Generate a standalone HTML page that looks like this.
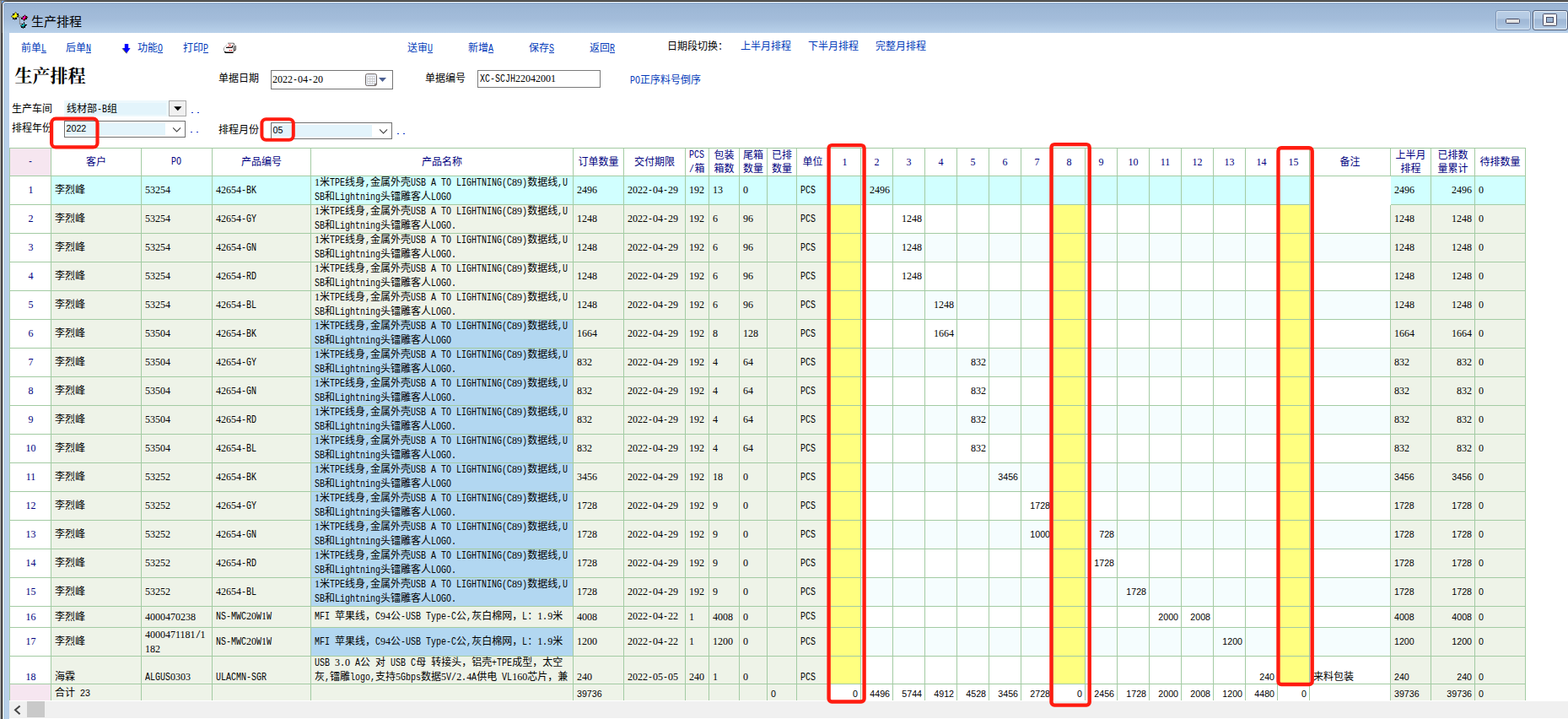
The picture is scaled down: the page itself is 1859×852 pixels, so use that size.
<!DOCTYPE html>
<html lang="zh"><head><meta charset="utf-8"><title>生产排程</title>
<style>
html,body{margin:0;padding:0}
body{width:1859px;height:852px;overflow:hidden;background:#fff;position:relative;
 font-family:"Liberation Serif",serif;font-size:12px;line-height:16px;color:#000}
.r{position:absolute}
.t{position:absolute;white-space:nowrap;line-height:14px;height:14px}
.m{font-family:"Liberation Mono",monospace;font-size:12px;display:inline-block;white-space:pre;
 transform:scaleX(.8333);transform-origin:0 50%}
.k{font-family:"Liberation Sans","Noto Sans CJK SC",sans-serif;font-size:12px}
.lk{color:#0039b9}
.c{position:absolute;display:flex;align-items:center;box-sizing:border-box;padding:0 3px 1px 4px;
 white-space:nowrap;overflow:hidden}
.c>div{width:100%}
.rt{text-align:right}
.ct{text-align:center}
.h{color:#000080;padding:0 0 1px 0}
.nv{color:#000080}
.ss{font-family:"Liberation Sans",sans-serif}
.dy{font-family:"Liberation Sans",sans-serif;font-size:10.67px}
u{text-decoration:underline}
</style></head>
<body>
<div class="r" style="left:0px;top:0px;width:1px;height:852px;background:#a0a0a0"></div>
<div class="r" style="left:1px;top:0px;width:1px;height:852px;background:#727272"></div>
<div class="r" style="left:2px;top:0px;width:1px;height:852px;background:#0a0a0a"></div>
<div class="r" style="left:3px;top:0px;width:1px;height:852px;background:#ffffff"></div>
<div class="r" style="left:4px;top:39px;width:7px;height:813px;background:#b8d0ea"></div>
<div class="r" style="left:0px;top:0px;width:1859px;height:1px;background:#6e6e6e"></div>
<div class="r" style="left:0px;top:1px;width:1859px;height:1px;background:#1c1c1c"></div>
<div class="r" style="left:3px;top:2px;width:1856px;height:1px;background:#ffffff"></div>
<div class="r" style="left:0px;top:1px;width:1px;height:851px;background:#a0a0a0"></div>
<div class="r" style="left:1px;top:1px;width:1px;height:851px;background:#727272"></div>
<div class="r" style="left:4px;top:3px;width:1855px;height:36px;background:linear-gradient(to bottom,#90aed0 0%,#99b3d3 4%,#9fb9d7 27%,#a3bcda 54%,#aec7e2 78%,#b9d1ea 100%)"></div>
<div class="r" style="left:2px;top:2px;width:1px;height:37px;background:#2c2c2c"></div>
<svg class="r" style="left:2px;top:1px" width="6" height="6" viewBox="0 0 6 6"><rect width="6" height="6" fill="#78b0ff"/><path d="M0 5A5 5 0 0 1 5 0H6V6H0Z" fill="#2c2c2c"/><path d="M1 5A4 4 0 0 1 5 1H6V6H1Z" fill="#fff"/><path d="M2 5A3 3 0 0 1 5 2H6V6H2Z" fill="#93b0d1"/></svg>
<svg class="r" style="left:10px;top:10px" width="28" height="28" viewBox="10 10 28 28"><path d="M20 20.4H27M23.4 20.4V28.4H27" stroke="#808080" stroke-width="1.1" fill="none"/><rect x="14.8" y="15.8" width="2.2" height="2.2" fill="#000" shape-rendering="crispEdges"/><rect x="19.9" y="15.8" width="2.2" height="2.2" fill="#000" shape-rendering="crispEdges"/><rect x="14.8" y="20.8" width="2.2" height="2.2" fill="#000" shape-rendering="crispEdges"/><rect x="17.5" y="20.9" width="2.0" height="2.0" fill="#000" shape-rendering="crispEdges"/><rect x="20.2" y="18.5" width="1.6" height="1.6" fill="#000" shape-rendering="crispEdges"/><path d="M18.5 14.3L20.0 16.2L20.3 18.0L22.6 18.5L20.3 19.4L19.2 20.5L17.9 21.3L17.5 23.5L17.0 21.3L15.2 20.8L13.1 19.5L15.2 18.2L17.0 17.6L17.3 15.9Z" fill="#ffff00" stroke="#1a1a30" stroke-width=".7" stroke-linejoin="round"/><rect x="24.9" y="20.9" width="2.0" height="2.0" fill="#000" shape-rendering="crispEdges"/><rect x="30.1" y="21.2" width="2.0" height="2.0" fill="#000" shape-rendering="crispEdges"/><rect x="30.3" y="18.8" width="1.7" height="1.7" fill="#000" shape-rendering="crispEdges"/><rect x="26.9" y="19.1" width="1.5" height="1.5" fill="#000" shape-rendering="crispEdges"/><rect x="28.9" y="22.9" width="1.5" height="1.5" fill="#000" shape-rendering="crispEdges"/><path d="M29.5 17.7L30.6 19.6L33.1 20.5L30.6 21.6L28.6 24.7L27.6 23.0L25.2 22.0L27.6 20.6Z" fill="#c00000" stroke="#101010" stroke-width=".7" stroke-linejoin="round"/><path d="M29.1 18.9L30.3 19.7L28.0 23.0L26.8 21.9Z" fill="#ff00ff"/><rect x="24.9" y="31.1" width="2.0" height="2.0" fill="#000" shape-rendering="crispEdges"/><rect x="27.6" y="31.1" width="2.0" height="2.0" fill="#000" shape-rendering="crispEdges"/><rect x="25.6" y="27.9" width="1.5" height="1.5" fill="#000" shape-rendering="crispEdges"/><rect x="29.4" y="29.9" width="1.5" height="1.5" fill="#000" shape-rendering="crispEdges"/><path d="M28.5 26.2V28.4M30 29.5H32" stroke="#000" stroke-width="1"/><path d="M24.0 30.5L26.8 29.5L28.5 28.0L29.8 28.9L29.0 30.4L27.9 31.3L27.5 33.8L26.8 31.5L25.0 31.2Z" fill="#00e0e0" stroke="#101010" stroke-width=".7" stroke-linejoin="round"/></svg>
<div class="t" style="left:37px;top:14.5px;line-height:22px;height:22px"><span class="k" style="font-size:15px">生产排程</span></div>
<div class="r" style="left:1773px;top:12px;width:42px;height:24px;box-sizing:border-box;border:1px solid #7d93b3;border-radius:3px;background:linear-gradient(to bottom,#b9cee6 0%,#b4cae3 42%,#a0b8d6 44%,#a4bcd9 70%,#bad1e9 100%);box-shadow:inset 0 0 0 1px rgba(255,255,255,.45)"></div>
<div class="r" style="left:1817px;top:12px;width:42px;height:24px;box-sizing:border-box;border:1px solid #4b5872;border-radius:3px;background:linear-gradient(to bottom,#b9cee6 0%,#b4cae3 42%,#a0b8d6 44%,#a4bcd9 70%,#bad1e9 100%);box-shadow:inset 0 0 0 1px rgba(255,255,255,.75)"></div>
<div class="r" style="left:1785px;top:22px;width:17px;height:6px;box-sizing:border-box;border:1px solid #474a63;border-radius:1.5px;background:#e2e2e2"></div>
<div class="r" style="left:1829px;top:16px;width:17px;height:15px;box-sizing:border-box;border:1px solid #474a63;border-radius:1.5px;background:linear-gradient(to bottom,#fff 0%,#fff 60%,#dcdcdc 100%)"></div>
<div class="r" style="left:1833px;top:20px;width:9px;height:7px;box-sizing:border-box;border:1px solid #474a63;background:#9bb4d2"></div>
<div class="t" style="left:25px;top:50px;color:#0039b9"><span class="k">前单</span><span class="m" style="margin-right:-1.2px"><u>L</u></span></div>
<div class="t" style="left:78px;top:50px;color:#0039b9"><span class="k">后单</span><span class="m" style="margin-right:-1.2px"><u>N</u></span></div>
<div class="t" style="left:163px;top:50px;color:#0039b9"><span class="k">功能</span><span class="m" style="margin-right:-1.2px"><u>O</u></span></div>
<div class="t" style="left:217px;top:50px;color:#0039b9"><span class="k">打印</span><span class="m" style="margin-right:-1.2px"><u>P</u></span></div>
<div class="t" style="left:483px;top:50px;color:#0039b9"><span class="k">送审</span><span class="m" style="margin-right:-1.2px"><u>U</u></span></div>
<div class="t" style="left:555px;top:50px;color:#0039b9"><span class="k">新增</span><span class="m" style="margin-right:-1.2px"><u>A</u></span></div>
<div class="t" style="left:627px;top:50px;color:#0039b9"><span class="k">保存</span><span class="m" style="margin-right:-1.2px"><u>S</u></span></div>
<div class="t" style="left:699px;top:50px;color:#0039b9"><span class="k">返回</span><span class="m" style="margin-right:-1.2px"><u>R</u></span></div>
<div class="t" style="left:791px;top:48px;color:#000"><span class="k">日期段切换：</span></div>
<div class="t" style="left:878px;top:48px;color:#0039b9"><span class="k">上半月排程</span></div>
<div class="t" style="left:958px;top:48px;color:#0039b9"><span class="k">下半月排程</span></div>
<div class="t" style="left:1038px;top:48px;color:#0039b9"><span class="k">完整月排程</span></div>
<div class="t" style="left:747px;top:88px;color:#0039b9"><span class="m" style="margin-right:-2.4px">PO</span><span class="k">正序料号倒序</span></div>
<svg class="r" style="left:143px;top:50px" width="14" height="15" viewBox="143 50 14 15">
<path d="M147.8 52H152.2V57H154.6L150.1 63.2L145 57H147.8Z" fill="#0000ff"/>
<path d="M145 57.4L150 63.4" stroke="#6b6b30" stroke-width="1" fill="none"/>
</svg>
<svg class="r" style="left:263px;top:49px" width="20" height="16" viewBox="263 49 20 16">
<path d="M270 51.2H277.2" stroke="#777" stroke-width="1"/>
<path d="M277.2 51.6V53" stroke="#111" stroke-width="1.2"/>
<path d="M269.6 52.6L266 56.6" stroke="#999" stroke-width="1"/>
<path d="M266 57L270 52H277L275 56.5H279L280 55V59L276.8 62H267L265.4 60.4V57Z" fill="#fff"/>
<path d="M276.2 56.4L278.2 54H280.2V59L276.6 62Z" fill="#858585"/>
<path d="M275.6 54.2H279.8" stroke="#8a8a8a" stroke-width=".9" fill="none"/>
<path d="M265.4 56.6V60.2" stroke="#9a9a9a" stroke-width="1"/>
<path d="M268 56.4H275L276 54" stroke="#111" stroke-width="1.2" fill="none"/>
<path d="M266.2 61L267.4 62.2H276.6" stroke="#000" stroke-width="1.4" fill="none"/>
<path d="M270.4 56L273.8 52.2M271.4 52.2L274.6 55.8" stroke="#e01010" stroke-width="1" stroke-dasharray="1 .5"/>
<rect x="271.9" y="59" width="1.2" height="1.2" fill="#f00"/><rect x="273.9" y="59" width="1.2" height="1.2" fill="#f00"/>
<circle cx="278.4" cy="59.6" r=".7" fill="#111"/>
</svg>
<div class="t" style="left:17.5px;top:77px;line-height:26px;height:26px"><span style="font-family:'Liberation Serif','Noto Serif CJK SC',serif;font-size:21px;font-weight:bold">生产排程</span></div>
<div class="t" style="left:259px;top:86px"><span class="k">单据日期</span></div>
<div class="t" style="left:504px;top:86px"><span class="k">单据编号</span></div>
<div class="t" style="left:14px;top:122px"><span class="k">生产车间</span></div>
<div class="t" style="left:14px;top:145px"><span class="k">排程年份</span></div>
<div class="t" style="left:259px;top:147px"><span class="k">排程月份</span></div>
<div class="r" style="left:321px;top:83px;width:145px;height:23px;box-sizing:border-box;border:1px solid #747474;background:#fff"></div>
<div class="t" style="left:323px;top:87px">2022<span class="m" style="margin-right:-1.2px">-</span>04<span class="m" style="margin-right:-1.2px">-</span>20</div>
<svg class="r" style="left:432px;top:86px" width="28" height="17" viewBox="432 86 28 17">
<rect x="433.5" y="87.7" width="13" height="13.8" rx="1.8" fill="#eef3fc" stroke="#6d6361" stroke-width="1"/>
<rect x="435.3" y="90.2" width="9.6" height="9.6" fill="#c9c9c9"/>
<g fill="#f3f6fd"><rect x="436.2" y="91" width="2.1" height="2"/><rect x="439.2" y="91" width="2.1" height="2"/><rect x="442.2" y="91" width="2.1" height="2"/>
<rect x="436.2" y="94" width="2.1" height="2"/><rect x="439.2" y="94" width="2.1" height="2"/><rect x="442.2" y="94" width="2.1" height="2"/>
<rect x="436.2" y="97" width="2.1" height="2"/><rect x="439.2" y="97" width="2.1" height="2"/><rect x="442.2" y="97" width="2.1" height="2"/></g>
<path d="M444.6 101.6V99.6H446.6" stroke="#6d6361" stroke-width="1" fill="none"/>
<path d="M449 92H458L453.5 97Z" fill="#4b6092"/>
</svg>
<div class="r" style="left:566px;top:83px;width:146px;height:21px;box-sizing:border-box;border:1px solid #7a7a7a;background:#fff"></div>
<div class="t" style="left:569px;top:86px"><span class="m" style="margin-right:-8.4px">XC-SCJH</span>22042001</div>
<div class="r" style="left:76px;top:119px;width:124px;height:19px;background:#edf8fc"></div>
<div class="r" style="left:78px;top:122px;width:119px;height:14px;background:#e3f4fb"></div>
<div class="t" style="left:79px;top:122px"><span class="k">线材部</span><span class="m" style="margin-right:-2.4px">-B</span><span class="k">组</span></div>
<div class="r" style="left:200px;top:119px;width:21px;height:19px;box-sizing:border-box;border:1px solid #a8a8a8;background:#f0f0f0"></div>
<svg class="r" style="left:205px;top:125px" width="12" height="8" viewBox="0 0 12 8"><path d="M1.2 1.2H10.4L5.8 6.3Z" fill="#000"/></svg>
<div class="r" style="left:76px;top:143px;width:144px;height:20px;box-sizing:border-box;border:1px solid #707070;background:#fff"></div>
<div class="r" style="left:78px;top:146px;width:118px;height:14px;background:#e3f4fb"></div>
<div class="t ss" style="left:78.5px;top:145px;font-size:10.7px">2022</div>
<svg class="r" style="left:204px;top:150px" width="12" height="8" viewBox="0 0 12 8"><path d="M1.1 1.3L5.6 6L10.1 1.3" stroke="#444" stroke-width="1.1" fill="none"/></svg>
<div class="r" style="left:321px;top:145px;width:144px;height:20px;box-sizing:border-box;border:1px solid #707070;background:#fff"></div>
<div class="r" style="left:324px;top:148px;width:117px;height:14px;background:#e3f4fb"></div>
<div class="t ss" style="left:323.5px;top:147px;font-size:10.7px">05</div>
<svg class="r" style="left:449px;top:152px" width="12" height="8" viewBox="0 0 12 8"><path d="M1.1 1.3L5.6 6L10.1 1.3" stroke="#444" stroke-width="1.1" fill="none"/></svg>
<div class="r" style="left:227px;top:133px;width:2px;height:1px;background:#1038c8"></div>
<div class="r" style="left:234px;top:133px;width:2px;height:1px;background:#1038c8"></div>
<div class="r" style="left:226px;top:156px;width:2px;height:1px;background:#1038c8"></div>
<div class="r" style="left:233px;top:156px;width:2px;height:1px;background:#1038c8"></div>
<div class="r" style="left:471px;top:158px;width:2px;height:1px;background:#1038c8"></div>
<div class="r" style="left:478px;top:158px;width:2px;height:1px;background:#1038c8"></div>
<div class="r" style="left:12px;top:176px;width:1796px;height:32px;background:#fff"></div>
<div class="r" style="left:12px;top:176px;width:48px;height:32px;background:#f6e6f0"></div>
<div class="r" style="left:61px;top:209px;width:921px;height:34px;background:#d1ffff"></div>
<div class="r" style="left:983px;top:209px;width:665px;height:34px;background:#d1ffff"></div>
<div class="r" style="left:1649px;top:209px;width:159px;height:34px;background:#d1ffff"></div>
<div class="r" style="left:61px;top:243px;width:921px;height:34px;background:#eef3e8"></div>
<div class="r" style="left:983px;top:243px;width:37px;height:34px;background:#ffff80"></div>
<div class="r" style="left:1249px;top:243px;width:37px;height:34px;background:#ffff80"></div>
<div class="r" style="left:1515px;top:243px;width:37px;height:34px;background:#ffff80"></div>
<div class="r" style="left:1649px;top:243px;width:159px;height:34px;background:#eef3e8"></div>
<div class="r" style="left:61px;top:277px;width:921px;height:34px;background:#eef3e8"></div>
<div class="r" style="left:983px;top:277px;width:665px;height:34px;background:#f5fdfe"></div>
<div class="r" style="left:983px;top:277px;width:37px;height:34px;background:#ffff80"></div>
<div class="r" style="left:1249px;top:277px;width:37px;height:34px;background:#ffff80"></div>
<div class="r" style="left:1515px;top:277px;width:37px;height:34px;background:#ffff80"></div>
<div class="r" style="left:1649px;top:277px;width:159px;height:34px;background:#eef3e8"></div>
<div class="r" style="left:61px;top:311px;width:921px;height:34px;background:#eef3e8"></div>
<div class="r" style="left:983px;top:311px;width:37px;height:34px;background:#ffff80"></div>
<div class="r" style="left:1249px;top:311px;width:37px;height:34px;background:#ffff80"></div>
<div class="r" style="left:1515px;top:311px;width:37px;height:34px;background:#ffff80"></div>
<div class="r" style="left:1649px;top:311px;width:159px;height:34px;background:#eef3e8"></div>
<div class="r" style="left:61px;top:345px;width:921px;height:34px;background:#eef3e8"></div>
<div class="r" style="left:983px;top:345px;width:665px;height:34px;background:#f5fdfe"></div>
<div class="r" style="left:983px;top:345px;width:37px;height:34px;background:#ffff80"></div>
<div class="r" style="left:1249px;top:345px;width:37px;height:34px;background:#ffff80"></div>
<div class="r" style="left:1515px;top:345px;width:37px;height:34px;background:#ffff80"></div>
<div class="r" style="left:1649px;top:345px;width:159px;height:34px;background:#eef3e8"></div>
<div class="r" style="left:61px;top:379px;width:921px;height:34px;background:#eef3e8"></div>
<div class="r" style="left:369px;top:379px;width:310px;height:34px;background:#b2d7f1"></div>
<div class="r" style="left:983px;top:379px;width:37px;height:34px;background:#ffff80"></div>
<div class="r" style="left:1249px;top:379px;width:37px;height:34px;background:#ffff80"></div>
<div class="r" style="left:1515px;top:379px;width:37px;height:34px;background:#ffff80"></div>
<div class="r" style="left:1649px;top:379px;width:159px;height:34px;background:#eef3e8"></div>
<div class="r" style="left:61px;top:413px;width:921px;height:34px;background:#eef3e8"></div>
<div class="r" style="left:369px;top:413px;width:310px;height:34px;background:#b2d7f1"></div>
<div class="r" style="left:983px;top:413px;width:665px;height:34px;background:#f5fdfe"></div>
<div class="r" style="left:983px;top:413px;width:37px;height:34px;background:#ffff80"></div>
<div class="r" style="left:1249px;top:413px;width:37px;height:34px;background:#ffff80"></div>
<div class="r" style="left:1515px;top:413px;width:37px;height:34px;background:#ffff80"></div>
<div class="r" style="left:1649px;top:413px;width:159px;height:34px;background:#eef3e8"></div>
<div class="r" style="left:61px;top:447px;width:921px;height:34px;background:#eef3e8"></div>
<div class="r" style="left:369px;top:447px;width:310px;height:34px;background:#b2d7f1"></div>
<div class="r" style="left:983px;top:447px;width:37px;height:34px;background:#ffff80"></div>
<div class="r" style="left:1249px;top:447px;width:37px;height:34px;background:#ffff80"></div>
<div class="r" style="left:1515px;top:447px;width:37px;height:34px;background:#ffff80"></div>
<div class="r" style="left:1649px;top:447px;width:159px;height:34px;background:#eef3e8"></div>
<div class="r" style="left:61px;top:481px;width:921px;height:34px;background:#eef3e8"></div>
<div class="r" style="left:369px;top:481px;width:310px;height:34px;background:#b2d7f1"></div>
<div class="r" style="left:983px;top:481px;width:665px;height:34px;background:#f5fdfe"></div>
<div class="r" style="left:983px;top:481px;width:37px;height:34px;background:#ffff80"></div>
<div class="r" style="left:1249px;top:481px;width:37px;height:34px;background:#ffff80"></div>
<div class="r" style="left:1515px;top:481px;width:37px;height:34px;background:#ffff80"></div>
<div class="r" style="left:1649px;top:481px;width:159px;height:34px;background:#eef3e8"></div>
<div class="r" style="left:61px;top:515px;width:921px;height:34px;background:#eef3e8"></div>
<div class="r" style="left:369px;top:515px;width:310px;height:34px;background:#b2d7f1"></div>
<div class="r" style="left:983px;top:515px;width:37px;height:34px;background:#ffff80"></div>
<div class="r" style="left:1249px;top:515px;width:37px;height:34px;background:#ffff80"></div>
<div class="r" style="left:1515px;top:515px;width:37px;height:34px;background:#ffff80"></div>
<div class="r" style="left:1649px;top:515px;width:159px;height:34px;background:#eef3e8"></div>
<div class="r" style="left:61px;top:549px;width:921px;height:34px;background:#eef3e8"></div>
<div class="r" style="left:369px;top:549px;width:310px;height:34px;background:#b2d7f1"></div>
<div class="r" style="left:983px;top:549px;width:665px;height:34px;background:#f5fdfe"></div>
<div class="r" style="left:983px;top:549px;width:37px;height:34px;background:#ffff80"></div>
<div class="r" style="left:1249px;top:549px;width:37px;height:34px;background:#ffff80"></div>
<div class="r" style="left:1515px;top:549px;width:37px;height:34px;background:#ffff80"></div>
<div class="r" style="left:1649px;top:549px;width:159px;height:34px;background:#eef3e8"></div>
<div class="r" style="left:61px;top:583px;width:921px;height:34px;background:#eef3e8"></div>
<div class="r" style="left:369px;top:583px;width:310px;height:34px;background:#b2d7f1"></div>
<div class="r" style="left:983px;top:583px;width:37px;height:34px;background:#ffff80"></div>
<div class="r" style="left:1249px;top:583px;width:37px;height:34px;background:#ffff80"></div>
<div class="r" style="left:1515px;top:583px;width:37px;height:34px;background:#ffff80"></div>
<div class="r" style="left:1649px;top:583px;width:159px;height:34px;background:#eef3e8"></div>
<div class="r" style="left:61px;top:617px;width:921px;height:34px;background:#eef3e8"></div>
<div class="r" style="left:369px;top:617px;width:310px;height:34px;background:#b2d7f1"></div>
<div class="r" style="left:983px;top:617px;width:665px;height:34px;background:#f5fdfe"></div>
<div class="r" style="left:983px;top:617px;width:37px;height:34px;background:#ffff80"></div>
<div class="r" style="left:1249px;top:617px;width:37px;height:34px;background:#ffff80"></div>
<div class="r" style="left:1515px;top:617px;width:37px;height:34px;background:#ffff80"></div>
<div class="r" style="left:1649px;top:617px;width:159px;height:34px;background:#eef3e8"></div>
<div class="r" style="left:61px;top:651px;width:921px;height:34px;background:#eef3e8"></div>
<div class="r" style="left:369px;top:651px;width:310px;height:34px;background:#b2d7f1"></div>
<div class="r" style="left:983px;top:651px;width:37px;height:34px;background:#ffff80"></div>
<div class="r" style="left:1249px;top:651px;width:37px;height:34px;background:#ffff80"></div>
<div class="r" style="left:1515px;top:651px;width:37px;height:34px;background:#ffff80"></div>
<div class="r" style="left:1649px;top:651px;width:159px;height:34px;background:#eef3e8"></div>
<div class="r" style="left:61px;top:685px;width:921px;height:34px;background:#eef3e8"></div>
<div class="r" style="left:369px;top:685px;width:310px;height:34px;background:#b2d7f1"></div>
<div class="r" style="left:983px;top:685px;width:665px;height:34px;background:#f5fdfe"></div>
<div class="r" style="left:983px;top:685px;width:37px;height:34px;background:#ffff80"></div>
<div class="r" style="left:1249px;top:685px;width:37px;height:34px;background:#ffff80"></div>
<div class="r" style="left:1515px;top:685px;width:37px;height:34px;background:#ffff80"></div>
<div class="r" style="left:1649px;top:685px;width:159px;height:34px;background:#eef3e8"></div>
<div class="r" style="left:61px;top:719px;width:921px;height:25px;background:#eef3e8"></div>
<div class="r" style="left:983px;top:719px;width:37px;height:25px;background:#ffff80"></div>
<div class="r" style="left:1249px;top:719px;width:37px;height:25px;background:#ffff80"></div>
<div class="r" style="left:1515px;top:719px;width:37px;height:25px;background:#ffff80"></div>
<div class="r" style="left:1649px;top:719px;width:159px;height:25px;background:#eef3e8"></div>
<div class="r" style="left:61px;top:744px;width:921px;height:34px;background:#eef3e8"></div>
<div class="r" style="left:369px;top:744px;width:310px;height:34px;background:#b2d7f1"></div>
<div class="r" style="left:983px;top:744px;width:665px;height:34px;background:#f5fdfe"></div>
<div class="r" style="left:983px;top:744px;width:37px;height:34px;background:#ffff80"></div>
<div class="r" style="left:1249px;top:744px;width:37px;height:34px;background:#ffff80"></div>
<div class="r" style="left:1515px;top:744px;width:37px;height:34px;background:#ffff80"></div>
<div class="r" style="left:1649px;top:744px;width:159px;height:34px;background:#eef3e8"></div>
<div class="r" style="left:61px;top:778px;width:921px;height:33px;background:#eef3e8"></div>
<div class="r" style="left:983px;top:778px;width:37px;height:33px;background:#ffff80"></div>
<div class="r" style="left:1249px;top:778px;width:37px;height:33px;background:#ffff80"></div>
<div class="r" style="left:1515px;top:778px;width:37px;height:33px;background:#ffff80"></div>
<div class="r" style="left:1649px;top:778px;width:159px;height:33px;background:#eef3e8"></div>
<div class="r" style="left:12px;top:811px;width:48px;height:19px;background:#f6e6f0"></div>
<div class="r" style="left:61px;top:811px;width:921px;height:19px;background:#eef3e8"></div>
<div class="r" style="left:1649px;top:811px;width:159px;height:19px;background:#eef3e8"></div>
<div class="r" style="left:11px;top:175px;width:1px;height:655px;background:#a3cba3"></div>
<div class="r" style="left:60px;top:175px;width:1px;height:655px;background:#a3cba3"></div>
<div class="r" style="left:167px;top:175px;width:1px;height:655px;background:#a3cba3"></div>
<div class="r" style="left:251px;top:175px;width:1px;height:655px;background:#a3cba3"></div>
<div class="r" style="left:368px;top:175px;width:1px;height:655px;background:#a3cba3"></div>
<div class="r" style="left:679px;top:175px;width:1px;height:655px;background:#a3cba3"></div>
<div class="r" style="left:739px;top:175px;width:1px;height:655px;background:#a3cba3"></div>
<div class="r" style="left:812px;top:175px;width:1px;height:655px;background:#a3cba3"></div>
<div class="r" style="left:840px;top:175px;width:1px;height:655px;background:#a3cba3"></div>
<div class="r" style="left:876px;top:175px;width:1px;height:655px;background:#a3cba3"></div>
<div class="r" style="left:909px;top:175px;width:1px;height:655px;background:#a3cba3"></div>
<div class="r" style="left:944px;top:175px;width:1px;height:655px;background:#a3cba3"></div>
<div class="r" style="left:982px;top:175px;width:1px;height:655px;background:#a3cba3"></div>
<div class="r" style="left:1020px;top:175px;width:1px;height:655px;background:#a3cba3"></div>
<div class="r" style="left:1058px;top:175px;width:1px;height:655px;background:#a3cba3"></div>
<div class="r" style="left:1096px;top:175px;width:1px;height:655px;background:#a3cba3"></div>
<div class="r" style="left:1134px;top:175px;width:1px;height:655px;background:#a3cba3"></div>
<div class="r" style="left:1172px;top:175px;width:1px;height:655px;background:#a3cba3"></div>
<div class="r" style="left:1210px;top:175px;width:1px;height:655px;background:#a3cba3"></div>
<div class="r" style="left:1248px;top:175px;width:1px;height:655px;background:#a3cba3"></div>
<div class="r" style="left:1286px;top:175px;width:1px;height:655px;background:#a3cba3"></div>
<div class="r" style="left:1324px;top:175px;width:1px;height:655px;background:#a3cba3"></div>
<div class="r" style="left:1362px;top:175px;width:1px;height:655px;background:#a3cba3"></div>
<div class="r" style="left:1400px;top:175px;width:1px;height:655px;background:#a3cba3"></div>
<div class="r" style="left:1438px;top:175px;width:1px;height:655px;background:#a3cba3"></div>
<div class="r" style="left:1476px;top:175px;width:1px;height:655px;background:#a3cba3"></div>
<div class="r" style="left:1514px;top:175px;width:1px;height:655px;background:#a3cba3"></div>
<div class="r" style="left:1552px;top:175px;width:1px;height:655px;background:#a3cba3"></div>
<div class="r" style="left:1648px;top:175px;width:1px;height:655px;background:#a3cba3"></div>
<div class="r" style="left:1696px;top:175px;width:1px;height:655px;background:#a3cba3"></div>
<div class="r" style="left:1748px;top:175px;width:1px;height:655px;background:#a3cba3"></div>
<div class="r" style="left:1808px;top:175px;width:1px;height:655px;background:#a3cba3"></div>
<div class="r" style="left:11px;top:175px;width:1798px;height:1px;background:#a3cba3"></div>
<div class="r" style="left:11px;top:208px;width:1798px;height:1px;background:#a3cba3"></div>
<div class="r" style="left:11px;top:242px;width:1798px;height:1px;background:#a3cba3"></div>
<div class="r" style="left:11px;top:276px;width:1798px;height:1px;background:#a3cba3"></div>
<div class="r" style="left:11px;top:310px;width:1798px;height:1px;background:#a3cba3"></div>
<div class="r" style="left:11px;top:344px;width:1798px;height:1px;background:#a3cba3"></div>
<div class="r" style="left:11px;top:378px;width:1798px;height:1px;background:#a3cba3"></div>
<div class="r" style="left:11px;top:412px;width:1798px;height:1px;background:#a3cba3"></div>
<div class="r" style="left:11px;top:446px;width:1798px;height:1px;background:#a3cba3"></div>
<div class="r" style="left:11px;top:480px;width:1798px;height:1px;background:#a3cba3"></div>
<div class="r" style="left:11px;top:514px;width:1798px;height:1px;background:#a3cba3"></div>
<div class="r" style="left:11px;top:548px;width:1798px;height:1px;background:#a3cba3"></div>
<div class="r" style="left:11px;top:582px;width:1798px;height:1px;background:#a3cba3"></div>
<div class="r" style="left:11px;top:616px;width:1798px;height:1px;background:#a3cba3"></div>
<div class="r" style="left:11px;top:650px;width:1798px;height:1px;background:#a3cba3"></div>
<div class="r" style="left:11px;top:684px;width:1798px;height:1px;background:#a3cba3"></div>
<div class="r" style="left:11px;top:718px;width:1798px;height:1px;background:#a3cba3"></div>
<div class="r" style="left:11px;top:743px;width:1798px;height:1px;background:#a3cba3"></div>
<div class="r" style="left:11px;top:777px;width:1798px;height:1px;background:#a3cba3"></div>
<div class="r" style="left:11px;top:810px;width:1798px;height:1px;background:#a3cba3"></div>
<div class="r" style="left:1553px;top:209px;width:96px;height:34px;background:#fff"></div>
<div class="c h" style="left:12px;top:176px;width:48px;height:32px"><div class="ct"><span class="m" style="margin-right:-1.2px">-</span></div></div>
<div class="c h" style="left:61px;top:176px;width:106px;height:32px"><div class="ct"><span class="k">客户</span></div></div>
<div class="c h" style="left:168px;top:176px;width:83px;height:32px"><div class="ct"><span class="m" style="margin-right:-2.4px">PO</span></div></div>
<div class="c h" style="left:252px;top:176px;width:116px;height:32px"><div class="ct"><span class="k">产品编号</span></div></div>
<div class="c h" style="left:369px;top:176px;width:310px;height:32px"><div class="ct"><span class="k">产品名称</span></div></div>
<div class="c h" style="left:680px;top:176px;width:59px;height:32px"><div class="ct"><span class="k">订单数量</span></div></div>
<div class="c h" style="left:740px;top:176px;width:72px;height:32px"><div class="ct"><span class="k">交付期限</span></div></div>
<div class="c h" style="left:813px;top:176px;width:27px;height:32px"><div class="ct"><span class="m" style="margin-right:-3.6px">PCS</span><br><span class="m" style="margin-right:-1.2px">/</span><span class="k">箱</span></div></div>
<div class="c h" style="left:841px;top:176px;width:35px;height:32px"><div class="ct"><span class="k">包装</span><br><span class="k">箱数</span></div></div>
<div class="c h" style="left:877px;top:176px;width:32px;height:32px"><div class="ct"><span class="k">尾箱</span><br><span class="k">数量</span></div></div>
<div class="c h" style="left:910px;top:176px;width:34px;height:32px"><div class="ct"><span class="k">已排</span><br><span class="k">数量</span></div></div>
<div class="c h" style="left:945px;top:176px;width:37px;height:32px"><div class="ct"><span class="k">单位</span></div></div>
<div class="c h" style="left:983px;top:176px;width:37px;height:32px"><div class="ct">1</div></div>
<div class="c h" style="left:1021px;top:176px;width:37px;height:32px"><div class="ct">2</div></div>
<div class="c h" style="left:1059px;top:176px;width:37px;height:32px"><div class="ct">3</div></div>
<div class="c h" style="left:1097px;top:176px;width:37px;height:32px"><div class="ct">4</div></div>
<div class="c h" style="left:1135px;top:176px;width:37px;height:32px"><div class="ct">5</div></div>
<div class="c h" style="left:1173px;top:176px;width:37px;height:32px"><div class="ct">6</div></div>
<div class="c h" style="left:1211px;top:176px;width:37px;height:32px"><div class="ct">7</div></div>
<div class="c h" style="left:1249px;top:176px;width:37px;height:32px"><div class="ct">8</div></div>
<div class="c h" style="left:1287px;top:176px;width:37px;height:32px"><div class="ct">9</div></div>
<div class="c h" style="left:1325px;top:176px;width:37px;height:32px"><div class="ct">10</div></div>
<div class="c h" style="left:1363px;top:176px;width:37px;height:32px"><div class="ct">11</div></div>
<div class="c h" style="left:1401px;top:176px;width:37px;height:32px"><div class="ct">12</div></div>
<div class="c h" style="left:1439px;top:176px;width:37px;height:32px"><div class="ct">13</div></div>
<div class="c h" style="left:1477px;top:176px;width:37px;height:32px"><div class="ct">14</div></div>
<div class="c h" style="left:1515px;top:176px;width:37px;height:32px"><div class="ct">15</div></div>
<div class="c h" style="left:1553px;top:176px;width:95px;height:32px"><div class="ct"><span class="k">备注</span></div></div>
<div class="c h" style="left:1649px;top:176px;width:47px;height:32px"><div class="ct"><span class="k">上半月</span><br><span class="k">排程</span></div></div>
<div class="c h" style="left:1697px;top:176px;width:51px;height:32px"><div class="ct"><span class="k">已排数</span><br><span class="k">量累计</span></div></div>
<div class="c h" style="left:1749px;top:176px;width:59px;height:32px"><div class="ct"><span class="k">待排数量</span></div></div>
<div class="c nv" style="left:12px;top:209px;width:48px;height:33px"><div class="ct">1</div></div>
<div class="c " style="left:61px;top:209px;width:106px;height:33px"><div class=""><span class="k">李烈峰</span></div></div>
<div class="c " style="left:168px;top:209px;width:83px;height:33px"><div class="">53254</div></div>
<div class="c " style="left:252px;top:209px;width:116px;height:33px"><div class="">42654<span class="m" style="margin-right:-3.6px">-BK</span></div></div>
<div class="c " style="left:369px;top:209px;width:310px;height:33px"><div class="">1<span class="k">米</span><span class="m" style="margin-right:-3.6px">TPE</span><span class="k">线身</span><span class="m" style="margin-right:-1.2px">,</span><span class="k">金属外壳</span><span class="m" style="margin-right:-24px">USB A TO LIGHTNING(C</span>89<span class="m" style="margin-right:-1.2px">)</span><span class="k">数据线</span><span class="m" style="margin-right:-2.4px">,U</span><br><span class="m" style="margin-right:-2.4px">SB</span><span class="k">和</span><span class="m" style="margin-right:-10.8px">Lightning</span><span class="k">头镭雕客人</span><span class="m" style="margin-right:-4.8px">LOGO</span></div></div>
<div class="c " style="left:680px;top:209px;width:59px;height:33px"><div class="">2496</div></div>
<div class="c " style="left:740px;top:209px;width:72px;height:33px"><div class="">2022<span class="m" style="margin-right:-1.2px">-</span>04<span class="m" style="margin-right:-1.2px">-</span>29</div></div>
<div class="c " style="left:813px;top:209px;width:27px;height:33px"><div class="">192</div></div>
<div class="c " style="left:841px;top:209px;width:35px;height:33px"><div class="">13</div></div>
<div class="c " style="left:877px;top:209px;width:32px;height:33px"><div class="">0</div></div>
<div class="c " style="left:945px;top:209px;width:37px;height:33px"><div class=""><span class="m" style="margin-right:-3.6px">PCS</span></div></div>
<div class="c " style="left:1021px;top:209px;width:37px;height:33px"><div class="rt">2496</div></div>
<div class="c " style="left:1649px;top:209px;width:47px;height:33px"><div class="">2496</div></div>
<div class="c " style="left:1697px;top:209px;width:51px;height:33px"><div class="rt">2496</div></div>
<div class="c " style="left:1749px;top:209px;width:59px;height:33px"><div class="">0</div></div>
<div class="c nv" style="left:12px;top:243px;width:48px;height:33px"><div class="ct">2</div></div>
<div class="c " style="left:61px;top:243px;width:106px;height:33px"><div class=""><span class="k">李烈峰</span></div></div>
<div class="c " style="left:168px;top:243px;width:83px;height:33px"><div class="">53254</div></div>
<div class="c " style="left:252px;top:243px;width:116px;height:33px"><div class="">42654<span class="m" style="margin-right:-3.6px">-GY</span></div></div>
<div class="c " style="left:369px;top:243px;width:310px;height:33px"><div class="">1<span class="k">米</span><span class="m" style="margin-right:-3.6px">TPE</span><span class="k">线身</span><span class="m" style="margin-right:-1.2px">,</span><span class="k">金属外壳</span><span class="m" style="margin-right:-24px">USB A TO LIGHTNING(C</span>89<span class="m" style="margin-right:-1.2px">)</span><span class="k">数据线</span><span class="m" style="margin-right:-2.4px">,U</span><br><span class="m" style="margin-right:-2.4px">SB</span><span class="k">和</span><span class="m" style="margin-right:-10.8px">Lightning</span><span class="k">头镭雕客人</span><span class="m" style="margin-right:-6px">LOGO.</span></div></div>
<div class="c " style="left:680px;top:243px;width:59px;height:33px"><div class="">1248</div></div>
<div class="c " style="left:740px;top:243px;width:72px;height:33px"><div class="">2022<span class="m" style="margin-right:-1.2px">-</span>04<span class="m" style="margin-right:-1.2px">-</span>29</div></div>
<div class="c " style="left:813px;top:243px;width:27px;height:33px"><div class="">192</div></div>
<div class="c " style="left:841px;top:243px;width:35px;height:33px"><div class="">6</div></div>
<div class="c " style="left:877px;top:243px;width:32px;height:33px"><div class="">96</div></div>
<div class="c " style="left:945px;top:243px;width:37px;height:33px"><div class=""><span class="m" style="margin-right:-3.6px">PCS</span></div></div>
<div class="c " style="left:1059px;top:243px;width:37px;height:33px"><div class="rt">1248</div></div>
<div class="c " style="left:1649px;top:243px;width:47px;height:33px"><div class="">1248</div></div>
<div class="c " style="left:1697px;top:243px;width:51px;height:33px"><div class="rt">1248</div></div>
<div class="c " style="left:1749px;top:243px;width:59px;height:33px"><div class="">0</div></div>
<div class="c nv" style="left:12px;top:277px;width:48px;height:33px"><div class="ct">3</div></div>
<div class="c " style="left:61px;top:277px;width:106px;height:33px"><div class=""><span class="k">李烈峰</span></div></div>
<div class="c " style="left:168px;top:277px;width:83px;height:33px"><div class="">53254</div></div>
<div class="c " style="left:252px;top:277px;width:116px;height:33px"><div class="">42654<span class="m" style="margin-right:-3.6px">-GN</span></div></div>
<div class="c " style="left:369px;top:277px;width:310px;height:33px"><div class="">1<span class="k">米</span><span class="m" style="margin-right:-3.6px">TPE</span><span class="k">线身</span><span class="m" style="margin-right:-1.2px">,</span><span class="k">金属外壳</span><span class="m" style="margin-right:-24px">USB A TO LIGHTNING(C</span>89<span class="m" style="margin-right:-1.2px">)</span><span class="k">数据线</span><span class="m" style="margin-right:-2.4px">,U</span><br><span class="m" style="margin-right:-2.4px">SB</span><span class="k">和</span><span class="m" style="margin-right:-10.8px">Lightning</span><span class="k">头镭雕客人</span><span class="m" style="margin-right:-6px">LOGO.</span></div></div>
<div class="c " style="left:680px;top:277px;width:59px;height:33px"><div class="">1248</div></div>
<div class="c " style="left:740px;top:277px;width:72px;height:33px"><div class="">2022<span class="m" style="margin-right:-1.2px">-</span>04<span class="m" style="margin-right:-1.2px">-</span>29</div></div>
<div class="c " style="left:813px;top:277px;width:27px;height:33px"><div class="">192</div></div>
<div class="c " style="left:841px;top:277px;width:35px;height:33px"><div class="">6</div></div>
<div class="c " style="left:877px;top:277px;width:32px;height:33px"><div class="">96</div></div>
<div class="c " style="left:945px;top:277px;width:37px;height:33px"><div class=""><span class="m" style="margin-right:-3.6px">PCS</span></div></div>
<div class="c " style="left:1059px;top:277px;width:37px;height:33px"><div class="rt">1248</div></div>
<div class="c " style="left:1649px;top:277px;width:47px;height:33px"><div class="">1248</div></div>
<div class="c " style="left:1697px;top:277px;width:51px;height:33px"><div class="rt">1248</div></div>
<div class="c " style="left:1749px;top:277px;width:59px;height:33px"><div class="">0</div></div>
<div class="c nv" style="left:12px;top:311px;width:48px;height:33px"><div class="ct">4</div></div>
<div class="c " style="left:61px;top:311px;width:106px;height:33px"><div class=""><span class="k">李烈峰</span></div></div>
<div class="c " style="left:168px;top:311px;width:83px;height:33px"><div class="">53254</div></div>
<div class="c " style="left:252px;top:311px;width:116px;height:33px"><div class="">42654<span class="m" style="margin-right:-3.6px">-RD</span></div></div>
<div class="c " style="left:369px;top:311px;width:310px;height:33px"><div class="">1<span class="k">米</span><span class="m" style="margin-right:-3.6px">TPE</span><span class="k">线身</span><span class="m" style="margin-right:-1.2px">,</span><span class="k">金属外壳</span><span class="m" style="margin-right:-24px">USB A TO LIGHTNING(C</span>89<span class="m" style="margin-right:-1.2px">)</span><span class="k">数据线</span><span class="m" style="margin-right:-2.4px">,U</span><br><span class="m" style="margin-right:-2.4px">SB</span><span class="k">和</span><span class="m" style="margin-right:-10.8px">Lightning</span><span class="k">头镭雕客人</span><span class="m" style="margin-right:-6px">LOGO.</span></div></div>
<div class="c " style="left:680px;top:311px;width:59px;height:33px"><div class="">1248</div></div>
<div class="c " style="left:740px;top:311px;width:72px;height:33px"><div class="">2022<span class="m" style="margin-right:-1.2px">-</span>04<span class="m" style="margin-right:-1.2px">-</span>29</div></div>
<div class="c " style="left:813px;top:311px;width:27px;height:33px"><div class="">192</div></div>
<div class="c " style="left:841px;top:311px;width:35px;height:33px"><div class="">6</div></div>
<div class="c " style="left:877px;top:311px;width:32px;height:33px"><div class="">96</div></div>
<div class="c " style="left:945px;top:311px;width:37px;height:33px"><div class=""><span class="m" style="margin-right:-3.6px">PCS</span></div></div>
<div class="c " style="left:1059px;top:311px;width:37px;height:33px"><div class="rt">1248</div></div>
<div class="c " style="left:1649px;top:311px;width:47px;height:33px"><div class="">1248</div></div>
<div class="c " style="left:1697px;top:311px;width:51px;height:33px"><div class="rt">1248</div></div>
<div class="c " style="left:1749px;top:311px;width:59px;height:33px"><div class="">0</div></div>
<div class="c nv" style="left:12px;top:345px;width:48px;height:33px"><div class="ct">5</div></div>
<div class="c " style="left:61px;top:345px;width:106px;height:33px"><div class=""><span class="k">李烈峰</span></div></div>
<div class="c " style="left:168px;top:345px;width:83px;height:33px"><div class="">53254</div></div>
<div class="c " style="left:252px;top:345px;width:116px;height:33px"><div class="">42654<span class="m" style="margin-right:-3.6px">-BL</span></div></div>
<div class="c " style="left:369px;top:345px;width:310px;height:33px"><div class="">1<span class="k">米</span><span class="m" style="margin-right:-3.6px">TPE</span><span class="k">线身</span><span class="m" style="margin-right:-1.2px">,</span><span class="k">金属外壳</span><span class="m" style="margin-right:-24px">USB A TO LIGHTNING(C</span>89<span class="m" style="margin-right:-1.2px">)</span><span class="k">数据线</span><span class="m" style="margin-right:-2.4px">,U</span><br><span class="m" style="margin-right:-2.4px">SB</span><span class="k">和</span><span class="m" style="margin-right:-10.8px">Lightning</span><span class="k">头镭雕客人</span><span class="m" style="margin-right:-6px">LOGO.</span></div></div>
<div class="c " style="left:680px;top:345px;width:59px;height:33px"><div class="">1248</div></div>
<div class="c " style="left:740px;top:345px;width:72px;height:33px"><div class="">2022<span class="m" style="margin-right:-1.2px">-</span>04<span class="m" style="margin-right:-1.2px">-</span>29</div></div>
<div class="c " style="left:813px;top:345px;width:27px;height:33px"><div class="">192</div></div>
<div class="c " style="left:841px;top:345px;width:35px;height:33px"><div class="">6</div></div>
<div class="c " style="left:877px;top:345px;width:32px;height:33px"><div class="">96</div></div>
<div class="c " style="left:945px;top:345px;width:37px;height:33px"><div class=""><span class="m" style="margin-right:-3.6px">PCS</span></div></div>
<div class="c " style="left:1097px;top:345px;width:37px;height:33px"><div class="rt">1248</div></div>
<div class="c " style="left:1649px;top:345px;width:47px;height:33px"><div class="">1248</div></div>
<div class="c " style="left:1697px;top:345px;width:51px;height:33px"><div class="rt">1248</div></div>
<div class="c " style="left:1749px;top:345px;width:59px;height:33px"><div class="">0</div></div>
<div class="c nv" style="left:12px;top:379px;width:48px;height:33px"><div class="ct">6</div></div>
<div class="c " style="left:61px;top:379px;width:106px;height:33px"><div class=""><span class="k">李烈峰</span></div></div>
<div class="c " style="left:168px;top:379px;width:83px;height:33px"><div class="">53504</div></div>
<div class="c " style="left:252px;top:379px;width:116px;height:33px"><div class="">42654<span class="m" style="margin-right:-3.6px">-BK</span></div></div>
<div class="c " style="left:369px;top:379px;width:310px;height:33px"><div class="">1<span class="k">米</span><span class="m" style="margin-right:-3.6px">TPE</span><span class="k">线身</span><span class="m" style="margin-right:-1.2px">,</span><span class="k">金属外壳</span><span class="m" style="margin-right:-24px">USB A TO LIGHTNING(C</span>89<span class="m" style="margin-right:-1.2px">)</span><span class="k">数据线</span><span class="m" style="margin-right:-2.4px">,U</span><br><span class="m" style="margin-right:-2.4px">SB</span><span class="k">和</span><span class="m" style="margin-right:-10.8px">Lightning</span><span class="k">头镭雕客人</span><span class="m" style="margin-right:-4.8px">LOGO</span></div></div>
<div class="c " style="left:680px;top:379px;width:59px;height:33px"><div class="">1664</div></div>
<div class="c " style="left:740px;top:379px;width:72px;height:33px"><div class="">2022<span class="m" style="margin-right:-1.2px">-</span>04<span class="m" style="margin-right:-1.2px">-</span>29</div></div>
<div class="c " style="left:813px;top:379px;width:27px;height:33px"><div class="">192</div></div>
<div class="c " style="left:841px;top:379px;width:35px;height:33px"><div class="">8</div></div>
<div class="c " style="left:877px;top:379px;width:32px;height:33px"><div class="">128</div></div>
<div class="c " style="left:945px;top:379px;width:37px;height:33px"><div class=""><span class="m" style="margin-right:-3.6px">PCS</span></div></div>
<div class="c " style="left:1097px;top:379px;width:37px;height:33px"><div class="rt">1664</div></div>
<div class="c " style="left:1649px;top:379px;width:47px;height:33px"><div class="">1664</div></div>
<div class="c " style="left:1697px;top:379px;width:51px;height:33px"><div class="rt">1664</div></div>
<div class="c " style="left:1749px;top:379px;width:59px;height:33px"><div class="">0</div></div>
<div class="c nv" style="left:12px;top:413px;width:48px;height:33px"><div class="ct">7</div></div>
<div class="c " style="left:61px;top:413px;width:106px;height:33px"><div class=""><span class="k">李烈峰</span></div></div>
<div class="c " style="left:168px;top:413px;width:83px;height:33px"><div class="">53504</div></div>
<div class="c " style="left:252px;top:413px;width:116px;height:33px"><div class="">42654<span class="m" style="margin-right:-3.6px">-GY</span></div></div>
<div class="c " style="left:369px;top:413px;width:310px;height:33px"><div class="">1<span class="k">米</span><span class="m" style="margin-right:-3.6px">TPE</span><span class="k">线身</span><span class="m" style="margin-right:-1.2px">,</span><span class="k">金属外壳</span><span class="m" style="margin-right:-24px">USB A TO LIGHTNING(C</span>89<span class="m" style="margin-right:-1.2px">)</span><span class="k">数据线</span><span class="m" style="margin-right:-2.4px">,U</span><br><span class="m" style="margin-right:-2.4px">SB</span><span class="k">和</span><span class="m" style="margin-right:-10.8px">Lightning</span><span class="k">头镭雕客人</span><span class="m" style="margin-right:-6px">LOGO.</span></div></div>
<div class="c " style="left:680px;top:413px;width:59px;height:33px"><div class="">832</div></div>
<div class="c " style="left:740px;top:413px;width:72px;height:33px"><div class="">2022<span class="m" style="margin-right:-1.2px">-</span>04<span class="m" style="margin-right:-1.2px">-</span>29</div></div>
<div class="c " style="left:813px;top:413px;width:27px;height:33px"><div class="">192</div></div>
<div class="c " style="left:841px;top:413px;width:35px;height:33px"><div class="">4</div></div>
<div class="c " style="left:877px;top:413px;width:32px;height:33px"><div class="">64</div></div>
<div class="c " style="left:945px;top:413px;width:37px;height:33px"><div class=""><span class="m" style="margin-right:-3.6px">PCS</span></div></div>
<div class="c " style="left:1135px;top:413px;width:37px;height:33px"><div class="rt">832</div></div>
<div class="c " style="left:1649px;top:413px;width:47px;height:33px"><div class="">832</div></div>
<div class="c " style="left:1697px;top:413px;width:51px;height:33px"><div class="rt">832</div></div>
<div class="c " style="left:1749px;top:413px;width:59px;height:33px"><div class="">0</div></div>
<div class="c nv" style="left:12px;top:447px;width:48px;height:33px"><div class="ct">8</div></div>
<div class="c " style="left:61px;top:447px;width:106px;height:33px"><div class=""><span class="k">李烈峰</span></div></div>
<div class="c " style="left:168px;top:447px;width:83px;height:33px"><div class="">53504</div></div>
<div class="c " style="left:252px;top:447px;width:116px;height:33px"><div class="">42654<span class="m" style="margin-right:-3.6px">-GN</span></div></div>
<div class="c " style="left:369px;top:447px;width:310px;height:33px"><div class="">1<span class="k">米</span><span class="m" style="margin-right:-3.6px">TPE</span><span class="k">线身</span><span class="m" style="margin-right:-1.2px">,</span><span class="k">金属外壳</span><span class="m" style="margin-right:-24px">USB A TO LIGHTNING(C</span>89<span class="m" style="margin-right:-1.2px">)</span><span class="k">数据线</span><span class="m" style="margin-right:-2.4px">,U</span><br><span class="m" style="margin-right:-2.4px">SB</span><span class="k">和</span><span class="m" style="margin-right:-10.8px">Lightning</span><span class="k">头镭雕客人</span><span class="m" style="margin-right:-6px">LOGO.</span></div></div>
<div class="c " style="left:680px;top:447px;width:59px;height:33px"><div class="">832</div></div>
<div class="c " style="left:740px;top:447px;width:72px;height:33px"><div class="">2022<span class="m" style="margin-right:-1.2px">-</span>04<span class="m" style="margin-right:-1.2px">-</span>29</div></div>
<div class="c " style="left:813px;top:447px;width:27px;height:33px"><div class="">192</div></div>
<div class="c " style="left:841px;top:447px;width:35px;height:33px"><div class="">4</div></div>
<div class="c " style="left:877px;top:447px;width:32px;height:33px"><div class="">64</div></div>
<div class="c " style="left:945px;top:447px;width:37px;height:33px"><div class=""><span class="m" style="margin-right:-3.6px">PCS</span></div></div>
<div class="c " style="left:1135px;top:447px;width:37px;height:33px"><div class="rt">832</div></div>
<div class="c " style="left:1649px;top:447px;width:47px;height:33px"><div class="">832</div></div>
<div class="c " style="left:1697px;top:447px;width:51px;height:33px"><div class="rt">832</div></div>
<div class="c " style="left:1749px;top:447px;width:59px;height:33px"><div class="">0</div></div>
<div class="c nv" style="left:12px;top:481px;width:48px;height:33px"><div class="ct">9</div></div>
<div class="c " style="left:61px;top:481px;width:106px;height:33px"><div class=""><span class="k">李烈峰</span></div></div>
<div class="c " style="left:168px;top:481px;width:83px;height:33px"><div class="">53504</div></div>
<div class="c " style="left:252px;top:481px;width:116px;height:33px"><div class="">42654<span class="m" style="margin-right:-3.6px">-RD</span></div></div>
<div class="c " style="left:369px;top:481px;width:310px;height:33px"><div class="">1<span class="k">米</span><span class="m" style="margin-right:-3.6px">TPE</span><span class="k">线身</span><span class="m" style="margin-right:-1.2px">,</span><span class="k">金属外壳</span><span class="m" style="margin-right:-24px">USB A TO LIGHTNING(C</span>89<span class="m" style="margin-right:-1.2px">)</span><span class="k">数据线</span><span class="m" style="margin-right:-2.4px">,U</span><br><span class="m" style="margin-right:-2.4px">SB</span><span class="k">和</span><span class="m" style="margin-right:-10.8px">Lightning</span><span class="k">头镭雕客人</span><span class="m" style="margin-right:-6px">LOGO.</span></div></div>
<div class="c " style="left:680px;top:481px;width:59px;height:33px"><div class="">832</div></div>
<div class="c " style="left:740px;top:481px;width:72px;height:33px"><div class="">2022<span class="m" style="margin-right:-1.2px">-</span>04<span class="m" style="margin-right:-1.2px">-</span>29</div></div>
<div class="c " style="left:813px;top:481px;width:27px;height:33px"><div class="">192</div></div>
<div class="c " style="left:841px;top:481px;width:35px;height:33px"><div class="">4</div></div>
<div class="c " style="left:877px;top:481px;width:32px;height:33px"><div class="">64</div></div>
<div class="c " style="left:945px;top:481px;width:37px;height:33px"><div class=""><span class="m" style="margin-right:-3.6px">PCS</span></div></div>
<div class="c " style="left:1135px;top:481px;width:37px;height:33px"><div class="rt">832</div></div>
<div class="c " style="left:1649px;top:481px;width:47px;height:33px"><div class="">832</div></div>
<div class="c " style="left:1697px;top:481px;width:51px;height:33px"><div class="rt">832</div></div>
<div class="c " style="left:1749px;top:481px;width:59px;height:33px"><div class="">0</div></div>
<div class="c nv" style="left:12px;top:515px;width:48px;height:33px"><div class="ct">10</div></div>
<div class="c " style="left:61px;top:515px;width:106px;height:33px"><div class=""><span class="k">李烈峰</span></div></div>
<div class="c " style="left:168px;top:515px;width:83px;height:33px"><div class="">53504</div></div>
<div class="c " style="left:252px;top:515px;width:116px;height:33px"><div class="">42654<span class="m" style="margin-right:-3.6px">-BL</span></div></div>
<div class="c " style="left:369px;top:515px;width:310px;height:33px"><div class="">1<span class="k">米</span><span class="m" style="margin-right:-3.6px">TPE</span><span class="k">线身</span><span class="m" style="margin-right:-1.2px">,</span><span class="k">金属外壳</span><span class="m" style="margin-right:-24px">USB A TO LIGHTNING(C</span>89<span class="m" style="margin-right:-1.2px">)</span><span class="k">数据线</span><span class="m" style="margin-right:-2.4px">,U</span><br><span class="m" style="margin-right:-2.4px">SB</span><span class="k">和</span><span class="m" style="margin-right:-10.8px">Lightning</span><span class="k">头镭雕客人</span><span class="m" style="margin-right:-6px">LOGO.</span></div></div>
<div class="c " style="left:680px;top:515px;width:59px;height:33px"><div class="">832</div></div>
<div class="c " style="left:740px;top:515px;width:72px;height:33px"><div class="">2022<span class="m" style="margin-right:-1.2px">-</span>04<span class="m" style="margin-right:-1.2px">-</span>29</div></div>
<div class="c " style="left:813px;top:515px;width:27px;height:33px"><div class="">192</div></div>
<div class="c " style="left:841px;top:515px;width:35px;height:33px"><div class="">4</div></div>
<div class="c " style="left:877px;top:515px;width:32px;height:33px"><div class="">64</div></div>
<div class="c " style="left:945px;top:515px;width:37px;height:33px"><div class=""><span class="m" style="margin-right:-3.6px">PCS</span></div></div>
<div class="c " style="left:1135px;top:515px;width:37px;height:33px"><div class="rt">832</div></div>
<div class="c " style="left:1649px;top:515px;width:47px;height:33px"><div class="">832</div></div>
<div class="c " style="left:1697px;top:515px;width:51px;height:33px"><div class="rt">832</div></div>
<div class="c " style="left:1749px;top:515px;width:59px;height:33px"><div class="">0</div></div>
<div class="c nv" style="left:12px;top:549px;width:48px;height:33px"><div class="ct">11</div></div>
<div class="c " style="left:61px;top:549px;width:106px;height:33px"><div class=""><span class="k">李烈峰</span></div></div>
<div class="c " style="left:168px;top:549px;width:83px;height:33px"><div class="">53252</div></div>
<div class="c " style="left:252px;top:549px;width:116px;height:33px"><div class="">42654<span class="m" style="margin-right:-3.6px">-BK</span></div></div>
<div class="c " style="left:369px;top:549px;width:310px;height:33px"><div class="">1<span class="k">米</span><span class="m" style="margin-right:-3.6px">TPE</span><span class="k">线身</span><span class="m" style="margin-right:-1.2px">,</span><span class="k">金属外壳</span><span class="m" style="margin-right:-24px">USB A TO LIGHTNING(C</span>89<span class="m" style="margin-right:-1.2px">)</span><span class="k">数据线</span><span class="m" style="margin-right:-2.4px">,U</span><br><span class="m" style="margin-right:-2.4px">SB</span><span class="k">和</span><span class="m" style="margin-right:-10.8px">Lightning</span><span class="k">头镭雕客人</span><span class="m" style="margin-right:-4.8px">LOGO</span></div></div>
<div class="c " style="left:680px;top:549px;width:59px;height:33px"><div class="">3456</div></div>
<div class="c " style="left:740px;top:549px;width:72px;height:33px"><div class="">2022<span class="m" style="margin-right:-1.2px">-</span>04<span class="m" style="margin-right:-1.2px">-</span>29</div></div>
<div class="c " style="left:813px;top:549px;width:27px;height:33px"><div class="">192</div></div>
<div class="c " style="left:841px;top:549px;width:35px;height:33px"><div class="">18</div></div>
<div class="c " style="left:877px;top:549px;width:32px;height:33px"><div class="">0</div></div>
<div class="c " style="left:945px;top:549px;width:37px;height:33px"><div class=""><span class="m" style="margin-right:-3.6px">PCS</span></div></div>
<div class="c dy" style="left:1173px;top:549px;width:37px;height:33px"><div class="rt">3456</div></div>
<div class="c dy" style="left:1649px;top:549px;width:47px;height:33px"><div class="">3456</div></div>
<div class="c dy" style="left:1697px;top:549px;width:51px;height:33px"><div class="rt">3456</div></div>
<div class="c dy" style="left:1749px;top:549px;width:59px;height:33px"><div class="">0</div></div>
<div class="c nv" style="left:12px;top:583px;width:48px;height:33px"><div class="ct">12</div></div>
<div class="c " style="left:61px;top:583px;width:106px;height:33px"><div class=""><span class="k">李烈峰</span></div></div>
<div class="c " style="left:168px;top:583px;width:83px;height:33px"><div class="">53252</div></div>
<div class="c " style="left:252px;top:583px;width:116px;height:33px"><div class="">42654<span class="m" style="margin-right:-3.6px">-GY</span></div></div>
<div class="c " style="left:369px;top:583px;width:310px;height:33px"><div class="">1<span class="k">米</span><span class="m" style="margin-right:-3.6px">TPE</span><span class="k">线身</span><span class="m" style="margin-right:-1.2px">,</span><span class="k">金属外壳</span><span class="m" style="margin-right:-24px">USB A TO LIGHTNING(C</span>89<span class="m" style="margin-right:-1.2px">)</span><span class="k">数据线</span><span class="m" style="margin-right:-2.4px">,U</span><br><span class="m" style="margin-right:-2.4px">SB</span><span class="k">和</span><span class="m" style="margin-right:-10.8px">Lightning</span><span class="k">头镭雕客人</span><span class="m" style="margin-right:-6px">LOGO.</span></div></div>
<div class="c " style="left:680px;top:583px;width:59px;height:33px"><div class="">1728</div></div>
<div class="c " style="left:740px;top:583px;width:72px;height:33px"><div class="">2022<span class="m" style="margin-right:-1.2px">-</span>04<span class="m" style="margin-right:-1.2px">-</span>29</div></div>
<div class="c " style="left:813px;top:583px;width:27px;height:33px"><div class="">192</div></div>
<div class="c " style="left:841px;top:583px;width:35px;height:33px"><div class="">9</div></div>
<div class="c " style="left:877px;top:583px;width:32px;height:33px"><div class="">0</div></div>
<div class="c " style="left:945px;top:583px;width:37px;height:33px"><div class=""><span class="m" style="margin-right:-3.6px">PCS</span></div></div>
<div class="c dy" style="left:1211px;top:583px;width:37px;height:33px"><div class="rt">1728</div></div>
<div class="c dy" style="left:1649px;top:583px;width:47px;height:33px"><div class="">1728</div></div>
<div class="c dy" style="left:1697px;top:583px;width:51px;height:33px"><div class="rt">1728</div></div>
<div class="c dy" style="left:1749px;top:583px;width:59px;height:33px"><div class="">0</div></div>
<div class="c nv" style="left:12px;top:617px;width:48px;height:33px"><div class="ct">13</div></div>
<div class="c " style="left:61px;top:617px;width:106px;height:33px"><div class=""><span class="k">李烈峰</span></div></div>
<div class="c " style="left:168px;top:617px;width:83px;height:33px"><div class="">53252</div></div>
<div class="c " style="left:252px;top:617px;width:116px;height:33px"><div class="">42654<span class="m" style="margin-right:-3.6px">-GN</span></div></div>
<div class="c " style="left:369px;top:617px;width:310px;height:33px"><div class="">1<span class="k">米</span><span class="m" style="margin-right:-3.6px">TPE</span><span class="k">线身</span><span class="m" style="margin-right:-1.2px">,</span><span class="k">金属外壳</span><span class="m" style="margin-right:-24px">USB A TO LIGHTNING(C</span>89<span class="m" style="margin-right:-1.2px">)</span><span class="k">数据线</span><span class="m" style="margin-right:-2.4px">,U</span><br><span class="m" style="margin-right:-2.4px">SB</span><span class="k">和</span><span class="m" style="margin-right:-10.8px">Lightning</span><span class="k">头镭雕客人</span><span class="m" style="margin-right:-6px">LOGO.</span></div></div>
<div class="c " style="left:680px;top:617px;width:59px;height:33px"><div class="">1728</div></div>
<div class="c " style="left:740px;top:617px;width:72px;height:33px"><div class="">2022<span class="m" style="margin-right:-1.2px">-</span>04<span class="m" style="margin-right:-1.2px">-</span>29</div></div>
<div class="c " style="left:813px;top:617px;width:27px;height:33px"><div class="">192</div></div>
<div class="c " style="left:841px;top:617px;width:35px;height:33px"><div class="">9</div></div>
<div class="c " style="left:877px;top:617px;width:32px;height:33px"><div class="">0</div></div>
<div class="c " style="left:945px;top:617px;width:37px;height:33px"><div class=""><span class="m" style="margin-right:-3.6px">PCS</span></div></div>
<div class="c dy" style="left:1211px;top:617px;width:37px;height:33px"><div class="rt">1000</div></div>
<div class="c dy" style="left:1287px;top:617px;width:37px;height:33px"><div class="rt">728</div></div>
<div class="c dy" style="left:1649px;top:617px;width:47px;height:33px"><div class="">1728</div></div>
<div class="c dy" style="left:1697px;top:617px;width:51px;height:33px"><div class="rt">1728</div></div>
<div class="c dy" style="left:1749px;top:617px;width:59px;height:33px"><div class="">0</div></div>
<div class="c nv" style="left:12px;top:651px;width:48px;height:33px"><div class="ct">14</div></div>
<div class="c " style="left:61px;top:651px;width:106px;height:33px"><div class=""><span class="k">李烈峰</span></div></div>
<div class="c " style="left:168px;top:651px;width:83px;height:33px"><div class="">53252</div></div>
<div class="c " style="left:252px;top:651px;width:116px;height:33px"><div class="">42654<span class="m" style="margin-right:-3.6px">-RD</span></div></div>
<div class="c " style="left:369px;top:651px;width:310px;height:33px"><div class="">1<span class="k">米</span><span class="m" style="margin-right:-3.6px">TPE</span><span class="k">线身</span><span class="m" style="margin-right:-1.2px">,</span><span class="k">金属外壳</span><span class="m" style="margin-right:-24px">USB A TO LIGHTNING(C</span>89<span class="m" style="margin-right:-1.2px">)</span><span class="k">数据线</span><span class="m" style="margin-right:-2.4px">,U</span><br><span class="m" style="margin-right:-2.4px">SB</span><span class="k">和</span><span class="m" style="margin-right:-10.8px">Lightning</span><span class="k">头镭雕客人</span><span class="m" style="margin-right:-6px">LOGO.</span></div></div>
<div class="c " style="left:680px;top:651px;width:59px;height:33px"><div class="">1728</div></div>
<div class="c " style="left:740px;top:651px;width:72px;height:33px"><div class="">2022<span class="m" style="margin-right:-1.2px">-</span>04<span class="m" style="margin-right:-1.2px">-</span>29</div></div>
<div class="c " style="left:813px;top:651px;width:27px;height:33px"><div class="">192</div></div>
<div class="c " style="left:841px;top:651px;width:35px;height:33px"><div class="">9</div></div>
<div class="c " style="left:877px;top:651px;width:32px;height:33px"><div class="">0</div></div>
<div class="c " style="left:945px;top:651px;width:37px;height:33px"><div class=""><span class="m" style="margin-right:-3.6px">PCS</span></div></div>
<div class="c dy" style="left:1287px;top:651px;width:37px;height:33px"><div class="rt">1728</div></div>
<div class="c dy" style="left:1649px;top:651px;width:47px;height:33px"><div class="">1728</div></div>
<div class="c dy" style="left:1697px;top:651px;width:51px;height:33px"><div class="rt">1728</div></div>
<div class="c dy" style="left:1749px;top:651px;width:59px;height:33px"><div class="">0</div></div>
<div class="c nv" style="left:12px;top:685px;width:48px;height:33px"><div class="ct">15</div></div>
<div class="c " style="left:61px;top:685px;width:106px;height:33px"><div class=""><span class="k">李烈峰</span></div></div>
<div class="c " style="left:168px;top:685px;width:83px;height:33px"><div class="">53252</div></div>
<div class="c " style="left:252px;top:685px;width:116px;height:33px"><div class="">42654<span class="m" style="margin-right:-3.6px">-BL</span></div></div>
<div class="c " style="left:369px;top:685px;width:310px;height:33px"><div class="">1<span class="k">米</span><span class="m" style="margin-right:-3.6px">TPE</span><span class="k">线身</span><span class="m" style="margin-right:-1.2px">,</span><span class="k">金属外壳</span><span class="m" style="margin-right:-24px">USB A TO LIGHTNING(C</span>89<span class="m" style="margin-right:-1.2px">)</span><span class="k">数据线</span><span class="m" style="margin-right:-2.4px">,U</span><br><span class="m" style="margin-right:-2.4px">SB</span><span class="k">和</span><span class="m" style="margin-right:-10.8px">Lightning</span><span class="k">头镭雕客人</span><span class="m" style="margin-right:-6px">LOGO.</span></div></div>
<div class="c " style="left:680px;top:685px;width:59px;height:33px"><div class="">1728</div></div>
<div class="c " style="left:740px;top:685px;width:72px;height:33px"><div class="">2022<span class="m" style="margin-right:-1.2px">-</span>04<span class="m" style="margin-right:-1.2px">-</span>29</div></div>
<div class="c " style="left:813px;top:685px;width:27px;height:33px"><div class="">192</div></div>
<div class="c " style="left:841px;top:685px;width:35px;height:33px"><div class="">9</div></div>
<div class="c " style="left:877px;top:685px;width:32px;height:33px"><div class="">0</div></div>
<div class="c " style="left:945px;top:685px;width:37px;height:33px"><div class=""><span class="m" style="margin-right:-3.6px">PCS</span></div></div>
<div class="c dy" style="left:1325px;top:685px;width:37px;height:33px"><div class="rt">1728</div></div>
<div class="c dy" style="left:1649px;top:685px;width:47px;height:33px"><div class="">1728</div></div>
<div class="c dy" style="left:1697px;top:685px;width:51px;height:33px"><div class="rt">1728</div></div>
<div class="c dy" style="left:1749px;top:685px;width:59px;height:33px"><div class="">0</div></div>
<div class="c nv" style="left:12px;top:719px;width:48px;height:24px"><div class="ct">16</div></div>
<div class="c " style="left:61px;top:719px;width:106px;height:24px"><div class=""><span class="k">李烈峰</span></div></div>
<div class="c " style="left:168px;top:719px;width:83px;height:24px"><div class="">4000470238</div></div>
<div class="c " style="left:252px;top:719px;width:116px;height:24px"><div class=""><span class="m" style="margin-right:-7.2px">NS-MWC</span>20<span class="m" style="margin-right:-1.2px">W</span>1<span class="m" style="margin-right:-1.2px">W</span></div></div>
<div class="c " style="left:369px;top:719px;width:310px;height:24px"><div class=""><span class="m" style="margin-right:-4.8px">MFI </span><span class="k">苹果线，</span><span class="m" style="margin-right:-1.2px">C</span>94<span class="k">公</span><span class="m" style="margin-right:-13.2px">-USB Type-C</span><span class="k">公</span><span class="m" style="margin-right:-1.2px">,</span><span class="k">灰白棉网，</span><span class="m" style="margin-right:-1.2px">L</span><span class="k">：</span>1<span class="m" style="margin-right:-1.2px">.</span>9<span class="k">米</span></div></div>
<div class="c " style="left:680px;top:719px;width:59px;height:24px"><div class="">4008</div></div>
<div class="c " style="left:740px;top:719px;width:72px;height:24px"><div class="">2022<span class="m" style="margin-right:-1.2px">-</span>04<span class="m" style="margin-right:-1.2px">-</span>22</div></div>
<div class="c " style="left:813px;top:719px;width:27px;height:24px"><div class="">1</div></div>
<div class="c " style="left:841px;top:719px;width:35px;height:24px"><div class="">4008</div></div>
<div class="c " style="left:877px;top:719px;width:32px;height:24px"><div class="">0</div></div>
<div class="c " style="left:945px;top:719px;width:37px;height:24px"><div class=""><span class="m" style="margin-right:-3.6px">PCS</span></div></div>
<div class="c dy" style="left:1363px;top:719px;width:37px;height:24px"><div class="rt">2000</div></div>
<div class="c dy" style="left:1401px;top:719px;width:37px;height:24px"><div class="rt">2008</div></div>
<div class="c dy" style="left:1649px;top:719px;width:47px;height:24px"><div class="">4008</div></div>
<div class="c dy" style="left:1697px;top:719px;width:51px;height:24px"><div class="rt">4008</div></div>
<div class="c dy" style="left:1749px;top:719px;width:59px;height:24px"><div class="">0</div></div>
<div class="c nv" style="left:12px;top:744px;width:48px;height:33px"><div class="ct">17</div></div>
<div class="c " style="left:61px;top:744px;width:106px;height:33px"><div class=""><span class="k">李烈峰</span></div></div>
<div class="c " style="left:168px;top:744px;width:83px;height:33px"><div class="">4000471181<span class="m" style="margin-right:-1.2px">/</span>1<br>182</div></div>
<div class="c " style="left:252px;top:744px;width:116px;height:33px"><div class=""><span class="m" style="margin-right:-7.2px">NS-MWC</span>20<span class="m" style="margin-right:-1.2px">W</span>1<span class="m" style="margin-right:-1.2px">W</span></div></div>
<div class="c " style="left:369px;top:744px;width:310px;height:33px"><div class=""><span class="m" style="margin-right:-4.8px">MFI </span><span class="k">苹果线，</span><span class="m" style="margin-right:-1.2px">C</span>94<span class="k">公</span><span class="m" style="margin-right:-13.2px">-USB Type-C</span><span class="k">公</span><span class="m" style="margin-right:-1.2px">,</span><span class="k">灰白棉网，</span><span class="m" style="margin-right:-1.2px">L</span><span class="k">：</span>1<span class="m" style="margin-right:-1.2px">.</span>9<span class="k">米</span></div></div>
<div class="c " style="left:680px;top:744px;width:59px;height:33px"><div class="">1200</div></div>
<div class="c " style="left:740px;top:744px;width:72px;height:33px"><div class="">2022<span class="m" style="margin-right:-1.2px">-</span>04<span class="m" style="margin-right:-1.2px">-</span>22</div></div>
<div class="c " style="left:813px;top:744px;width:27px;height:33px"><div class="">1</div></div>
<div class="c " style="left:841px;top:744px;width:35px;height:33px"><div class="">1200</div></div>
<div class="c " style="left:877px;top:744px;width:32px;height:33px"><div class="">0</div></div>
<div class="c " style="left:945px;top:744px;width:37px;height:33px"><div class=""><span class="m" style="margin-right:-3.6px">PCS</span></div></div>
<div class="c dy" style="left:1439px;top:744px;width:37px;height:33px"><div class="rt">1200</div></div>
<div class="c dy" style="left:1649px;top:744px;width:47px;height:33px"><div class="">1200</div></div>
<div class="c dy" style="left:1697px;top:744px;width:51px;height:33px"><div class="rt">1200</div></div>
<div class="c dy" style="left:1749px;top:744px;width:59px;height:33px"><div class="">0</div></div>
<div class="r" style="left:0;top:778px;width:1859px;height:32px;overflow:hidden">
<div class="c nv" style="left:12px;top:0px;width:48px;height:49px"><div class="ct">18</div></div>
<div class="c " style="left:61px;top:0px;width:106px;height:49px"><div class=""><span class="k">海霖</span></div></div>
<div class="c " style="left:168px;top:0px;width:83px;height:49px"><div class=""><span class="m" style="margin-right:-6px">ALGUS</span>0303</div></div>
<div class="c " style="left:252px;top:0px;width:116px;height:49px"><div class=""><span class="m" style="margin-right:-12px">ULACMN-SGR</span></div></div>
<div class="c " style="left:369px;top:0px;width:310px;height:49px"><div class=""><span class="m" style="margin-right:-4.8px">USB </span>3<span class="m" style="margin-right:-1.2px">.</span>0<span class="m" style="margin-right:-2.4px"> A</span><span class="k">公</span><span class="m" style="margin-right:-1.2px"> </span><span class="k">对</span><span class="m" style="margin-right:-7.2px"> USB C</span><span class="k">母</span><span class="m" style="margin-right:-1.2px"> </span><span class="k">转接头，铝壳</span><span class="m" style="margin-right:-4.8px">+TPE</span><span class="k">成型，太空</span><br><span class="k">灰</span><span class="m" style="margin-right:-1.2px">,</span><span class="k">镭雕</span><span class="m" style="margin-right:-6px">logo,</span><span class="k">支持</span>5<span class="m" style="margin-right:-4.8px">Gbps</span><span class="k">数据</span>5<span class="m" style="margin-right:-2.4px">V/</span>2<span class="m" style="margin-right:-1.2px">.</span>4<span class="m" style="margin-right:-1.2px">A</span><span class="k">供电</span><span class="m" style="margin-right:-3.6px"> VL</span>160<span class="k">芯片，兼</span><br><span class="k">容</span></div></div>
<div class="c " style="left:680px;top:0px;width:59px;height:49px"><div class="">240</div></div>
<div class="c " style="left:740px;top:0px;width:72px;height:49px"><div class="">2022<span class="m" style="margin-right:-1.2px">-</span>05<span class="m" style="margin-right:-1.2px">-</span>05</div></div>
<div class="c " style="left:813px;top:0px;width:27px;height:49px"><div class="">240</div></div>
<div class="c " style="left:841px;top:0px;width:35px;height:49px"><div class="">1</div></div>
<div class="c " style="left:877px;top:0px;width:32px;height:49px"><div class="">0</div></div>
<div class="c " style="left:945px;top:0px;width:37px;height:49px"><div class=""><span class="m" style="margin-right:-3.6px">PCS</span></div></div>
<div class="c dy" style="left:1477px;top:0px;width:37px;height:49px"><div class="rt">240</div></div>
<div class="c " style="left:1553px;top:0px;width:95px;height:49px"><div class=""><span class="k">来料包装</span></div></div>
<div class="c dy" style="left:1649px;top:0px;width:47px;height:49px"><div class="">240</div></div>
<div class="c dy" style="left:1697px;top:0px;width:51px;height:49px"><div class="rt">240</div></div>
<div class="c dy" style="left:1749px;top:0px;width:59px;height:49px"><div class="">0</div></div>
</div>
<div class="c dy" style="left:61px;top:812px;width:106px;height:20px"><div class=""><span class="k">合计</span><span class="m" style="margin-right:-1.2px"> </span>23</div></div>
<div class="c dy" style="left:680px;top:812px;width:59px;height:20px"><div class="">39736</div></div>
<div class="c dy" style="left:910px;top:812px;width:34px;height:20px"><div class="">0</div></div>
<div class="c dy" style="left:983px;top:812px;width:37px;height:20px"><div class="rt">0</div></div>
<div class="c dy" style="left:1021px;top:812px;width:37px;height:20px"><div class="rt">4496</div></div>
<div class="c dy" style="left:1059px;top:812px;width:37px;height:20px"><div class="rt">5744</div></div>
<div class="c dy" style="left:1097px;top:812px;width:37px;height:20px"><div class="rt">4912</div></div>
<div class="c dy" style="left:1135px;top:812px;width:37px;height:20px"><div class="rt">4528</div></div>
<div class="c dy" style="left:1173px;top:812px;width:37px;height:20px"><div class="rt">3456</div></div>
<div class="c dy" style="left:1211px;top:812px;width:37px;height:20px"><div class="rt">2728</div></div>
<div class="c dy" style="left:1249px;top:812px;width:37px;height:20px"><div class="rt">0</div></div>
<div class="c dy" style="left:1287px;top:812px;width:37px;height:20px"><div class="rt">2456</div></div>
<div class="c dy" style="left:1325px;top:812px;width:37px;height:20px"><div class="rt">1728</div></div>
<div class="c dy" style="left:1363px;top:812px;width:37px;height:20px"><div class="rt">2000</div></div>
<div class="c dy" style="left:1401px;top:812px;width:37px;height:20px"><div class="rt">2008</div></div>
<div class="c dy" style="left:1439px;top:812px;width:37px;height:20px"><div class="rt">1200</div></div>
<div class="c dy" style="left:1477px;top:812px;width:37px;height:20px"><div class="rt">4480</div></div>
<div class="c dy" style="left:1515px;top:812px;width:37px;height:20px"><div class="rt">0</div></div>
<div class="c dy" style="left:1649px;top:812px;width:47px;height:20px"><div class="">39736</div></div>
<div class="c dy" style="left:1697px;top:812px;width:51px;height:20px"><div class="rt">39736</div></div>
<div class="c dy" style="left:1749px;top:812px;width:59px;height:20px"><div class="">0</div></div>
<div class="r" style="left:11px;top:831px;width:1848px;height:20px;background:#f0f0f0"></div>
<div class="r" style="left:32px;top:831px;width:21px;height:19px;background:#c9c9c9"></div>
<svg class="r" style="left:14px;top:834px" width="12" height="14" viewBox="0 0 12 14"><path d="M9.6 2.4L4 7.3L9.6 12.2" stroke="#444" stroke-width="2" fill="none"/></svg>
<svg class="r" style="left:0;top:0;pointer-events:none" width="1859" height="852" viewBox="0 0 1859 852">
<rect x="61.10" y="140.70" width="54.40" height="33.70" rx="5.0" fill="none" stroke="#ff1c10" stroke-width="4.2"/>
<rect x="310.40" y="141.30" width="37.40" height="24.50" rx="5.0" fill="none" stroke="#ff1c10" stroke-width="4.0"/>
<rect x="982.60" y="172.10" width="42.00" height="659.40" rx="3.6" fill="none" stroke="#ff1c10" stroke-width="4.4"/>
<rect x="1246.50" y="171.10" width="45.20" height="664.50" rx="3.6" fill="none" stroke="#ff1c10" stroke-width="4.4"/>
<rect x="1515.50" y="175.30" width="40.20" height="635.70" rx="3.6" fill="none" stroke="#ff1c10" stroke-width="4.4"/>
</svg>
</body></html>
